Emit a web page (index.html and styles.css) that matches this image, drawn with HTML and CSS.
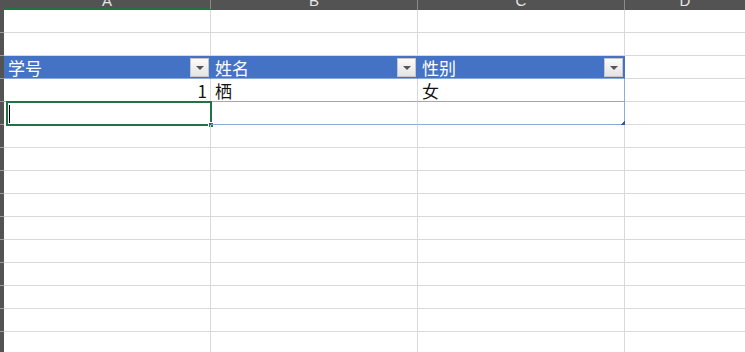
FILE: index.html
```html
<!DOCTYPE html>
<html lang="zh-CN">
<head>
  <meta charset="UTF-8" />
  <title>Sheet1</title>
  <link rel="stylesheet" href="styles.css">
</head>
<body>
  <div class="sheet">
    <!-- column headers -->
    <div class="rail"></div>
    <div class="colhead active"><span>A</span></div>
    <div class="colhead"><span>B</span></div>
    <div class="colhead"><span>C</span></div>
    <div class="colhead last"><span>D</span></div>

    <!-- row 1 -->
    <div class="rail"></div>
    <div class="cell"></div><div class="cell"></div><div class="cell"></div><div class="cell last"></div>

    <!-- row 2 -->
    <div class="rail"></div>
    <div class="cell"></div><div class="cell"></div><div class="cell"></div><div class="cell last"></div>

    <!-- table header -->
    <div class="rail"></div>
    <div class="cell th"><span>学号</span><i class="filter"></i></div>
    <div class="cell th"><span>姓名</span><i class="filter"></i></div>
    <div class="cell th"><span>性别</span><i class="filter"></i></div>
    <div class="cell last"></div>

    <!-- data row -->
    <div class="rail"></div>
    <div class="cell td num">1</div>
    <div class="cell td">栖</div>
    <div class="cell td edge">女</div>
    <div class="cell last"></div>

    <!-- new row -->
    <div class="rail"></div>
    <div class="cell td bottom selected"><b class="caret"></b><b class="handle"></b></div>
    <div class="cell td bottom"></div>
    <div class="cell td bottom edge"><b class="resize"></b></div>
    <div class="cell last"></div>

    <!-- empty rows -->
    <div class="rail"></div><div class="cell"></div><div class="cell"></div><div class="cell"></div><div class="cell last"></div>
    <div class="rail"></div><div class="cell"></div><div class="cell"></div><div class="cell"></div><div class="cell last"></div>
    <div class="rail"></div><div class="cell"></div><div class="cell"></div><div class="cell"></div><div class="cell last"></div>
    <div class="rail"></div><div class="cell"></div><div class="cell"></div><div class="cell"></div><div class="cell last"></div>
    <div class="rail"></div><div class="cell"></div><div class="cell"></div><div class="cell"></div><div class="cell last"></div>
    <div class="rail"></div><div class="cell"></div><div class="cell"></div><div class="cell"></div><div class="cell last"></div>
    <div class="rail"></div><div class="cell"></div><div class="cell"></div><div class="cell"></div><div class="cell last"></div>
    <div class="rail"></div><div class="cell"></div><div class="cell"></div><div class="cell"></div><div class="cell last"></div>
    <div class="rail"></div><div class="cell"></div><div class="cell"></div><div class="cell"></div><div class="cell last"></div>
    <div class="rail"></div><div class="cell"></div><div class="cell"></div><div class="cell"></div><div class="cell last"></div>
  </div>
</body>
</html>
```

FILE: styles.css
```css
* {
  box-sizing: border-box;
}
html, body {
  margin: 0;
  background: #fff;
  overflow: hidden;
}
body {
  width: 745px;
  height: 352px;
  font-family: "Noto Sans CJK SC", "Noto Sans", sans-serif;
}
.sheet {
  display: grid;
  grid-template-columns: 4px 207px 207px 207px 120px;
  grid-template-rows: 10px repeat(15, 23px);
}
.rail {
  background: #535353;
  border-bottom: 1px solid #9a9a9a;
}
.sheet > .rail:first-child {
  border-bottom: none;
}
.colhead {
  background: #535353;
  border-right: 1px solid #8a8a8a;
  overflow: hidden;
  text-align: center;
  color: #e6e6e6;
  font-family: "Liberation Sans", sans-serif;
  font-size: 15px;
  line-height: 14px;
}
.colhead span {
  display: block;
  margin-top: -6px;
}
.colhead.active {
  border-bottom: 2px solid #217346;
}
.colhead.last {
  border-right: none;
}
.cell {
  position: relative;
  border-right: 1px solid #d9d9d9;
  border-bottom: 1px solid #d9d9d9;
  font-size: 17px;
  line-height: 24px;
  color: #111;
  padding: 0 4px;
  white-space: nowrap;
}
.cell.last {
  border-right: none;
}
.th {
  background: #4472c4;
  color: #fff;
  border-right: 1px solid #4472c4;
  border-bottom: 1px solid #8ea9db;
  display: flex;
  align-items: center;
  justify-content: space-between;
  padding: 1px 1px 0 4px;
}
.th .filter {
  width: 19px;
  height: 19px;
  margin-top: -1px;
  background: linear-gradient(#fbfbfb, #e4e4e4);
  border: 1px solid #c6c6c6;
  position: relative;
}
.th .filter::after {
  content: "";
  position: absolute;
  left: 5px;
  top: 7px;
  border-left: 4px solid transparent;
  border-right: 4px solid transparent;
  border-top: 4px solid #555;
}
.td {
  border-bottom: 1px solid #8ea9db;
}
.td.edge {
  border-right: 1px solid #8ea9db;
}
.num {
  text-align: right;
  padding-right: 3px;
}
.selected {
  border: 2px solid #217346;
  margin: -1px -1px -1px 2px;
}
.caret {
  position: absolute;
  left: 1px;
  top: 2px;
  width: 1px;
  height: 18px;
  background: #000;
}
.handle {
  position: absolute;
  right: -4px;
  bottom: -4px;
  width: 6px;
  height: 6px;
  background: #217346;
  border: 1px solid #fff;
}
.resize {
  position: absolute;
  right: -1px;
  bottom: -1px;
  width: 5px;
  height: 5px;
  background: linear-gradient(135deg, transparent 50%, #3b56a8 50%);
}
```
